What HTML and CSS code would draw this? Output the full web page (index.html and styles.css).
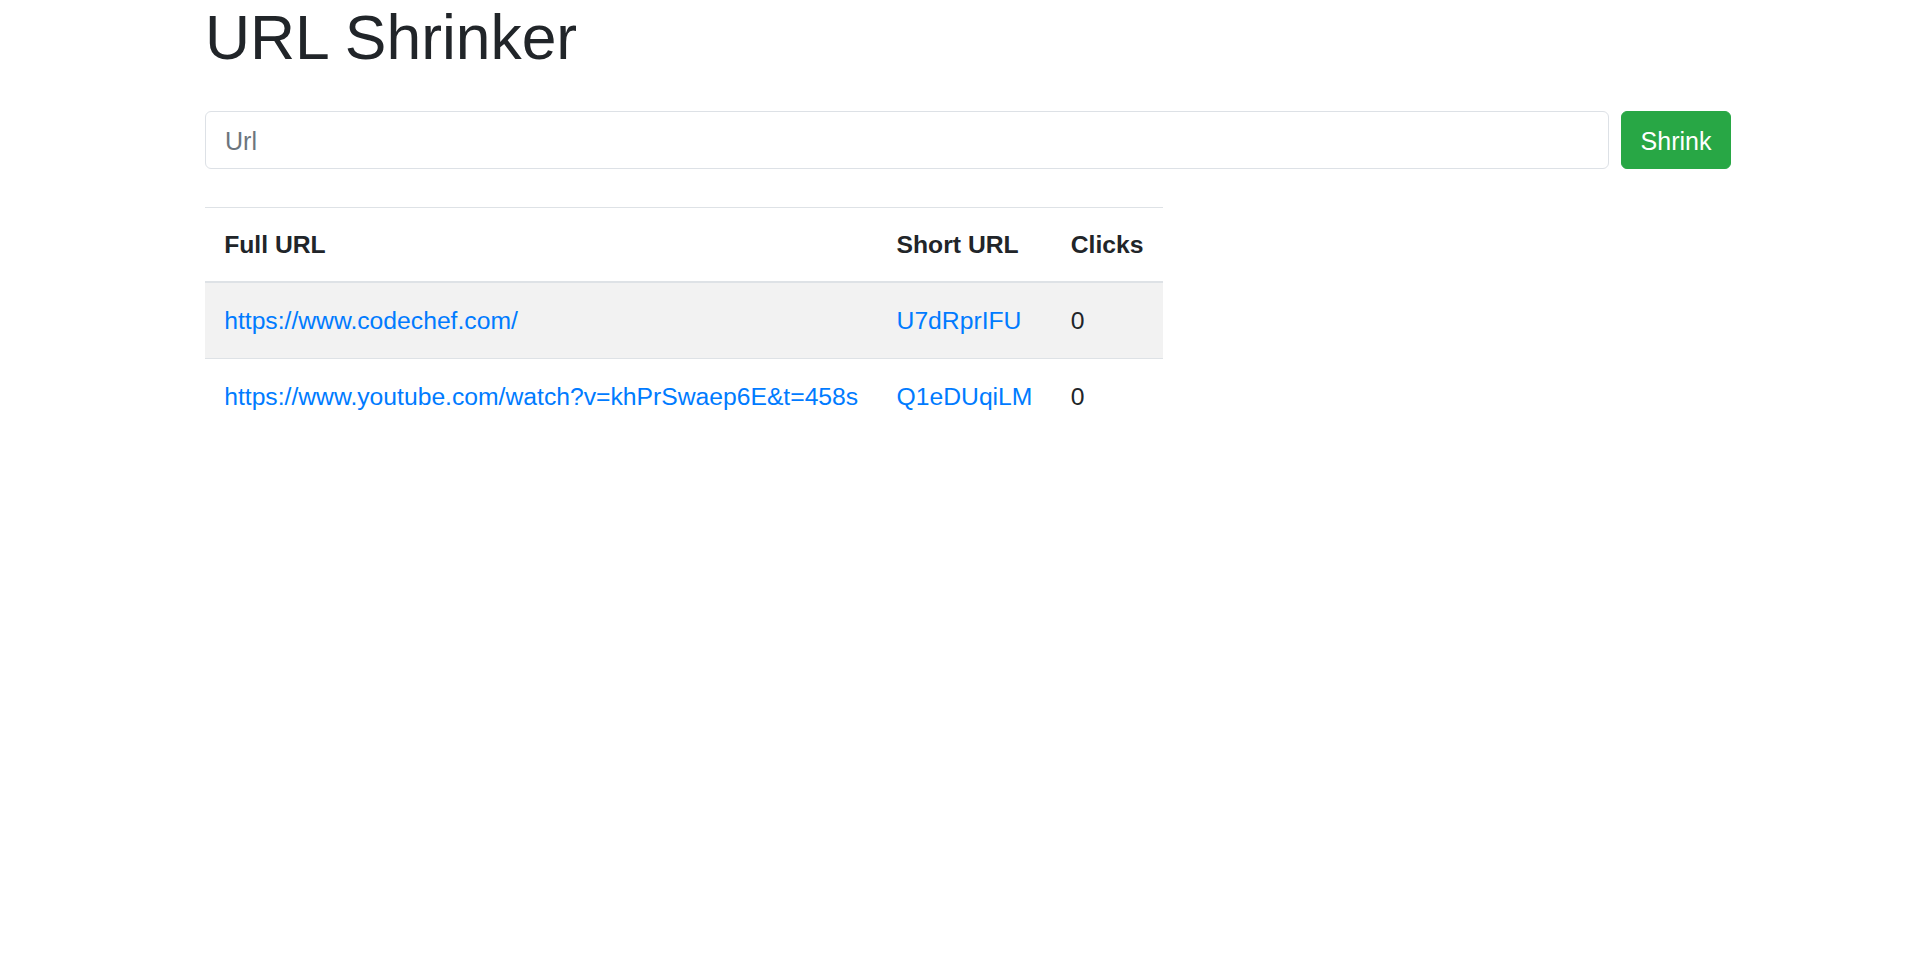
FILE: index.html
```html
<!DOCTYPE html>
<html lang="en">
<head>
<meta charset="utf-8">
<title>URL Shrinker</title>
<link rel="stylesheet" href="styles.css">
</head>
<body>
<div class="container">
  <h1 class="title">URL Shrinker</h1>
  <form class="shrink-form" action="#">
    <input class="url-input" type="url" name="fullUrl" placeholder="Url">
    <button class="btn-shrink" type="submit">Shrink</button>
  </form>
  <table class="url-table">
    <thead>
      <tr>
        <th>Full URL</th>
        <th>Short URL</th>
        <th>Clicks</th>
      </tr>
    </thead>
    <tbody>
      <tr class="striped">
        <td><a href="#">https://www.codechef.com/</a></td>
        <td><a href="#">U7dRprIFU</a></td>
        <td>0</td>
      </tr>
      <tr>
        <td><a href="#">https://www.youtube.com/watch?v=khPrSwaep6E&amp;t=458s</a></td>
        <td><a href="#">Q1eDUqiLM</a></td>
        <td>0</td>
      </tr>
    </tbody>
  </table>
</div>
</body>
</html>
```

FILE: styles.css
```css
* {
  box-sizing: border-box;
}

html, body {
  margin: 0;
  padding: 0;
  background: #ffffff;
}

body {
  font-family: "Liberation Sans", Arial, Helvetica, sans-serif;
  font-size: 24.7px;
  line-height: 1.5;
  color: #212529;
}

.container {
  width: 1526px;
  margin-left: 205px;
}

.title {
  margin: 0;
  font-size: 62.4px;
  font-weight: 500;
  line-height: 76.8px;
  color: #212529;
}

.shrink-form {
  display: flex;
  gap: 12.5px;
  margin-top: 34px;
}

.url-input {
  flex: 1;
  height: 58px;
  padding: 3px 19px 0;
  font-family: inherit;
  font-size: 25px;
  color: #495057;
  background: #fff;
  border: 1.5px solid #dde1e6;
  border-radius: 6px;
  outline: none;
}

.url-input::placeholder {
  color: #6c757d;
  opacity: 1;
}

.btn-shrink {
  width: 110px;
  height: 58px;
  padding: 3px 0 0;
  font-family: inherit;
  font-size: 25px;
  color: #fff;
  background: #28a745;
  border: 1px solid #28a745;
  border-radius: 6px;
  cursor: pointer;
}

.url-table {
  margin-top: 38px;
  border-collapse: collapse;
}

.url-table th,
.url-table td {
  text-align: left;
  vertical-align: top;
  padding: 19px 19.2px;
  line-height: 37px;
  white-space: nowrap;
}

.url-table th {
  font-weight: 700;
  padding-top: 18px;
  padding-bottom: 18px;
  border-top: 1px solid #dee2e6;
  border-bottom: 2px solid #dee2e6;
}

.url-table td {
  border-top: 1px solid #dee2e6;
}

.url-table tbody tr:first-child td {
  border-top: 0;
}

.url-table .striped {
  background: #f2f2f2;
}

.url-table a {
  color: #007bff;
  text-decoration: none;
}
```
